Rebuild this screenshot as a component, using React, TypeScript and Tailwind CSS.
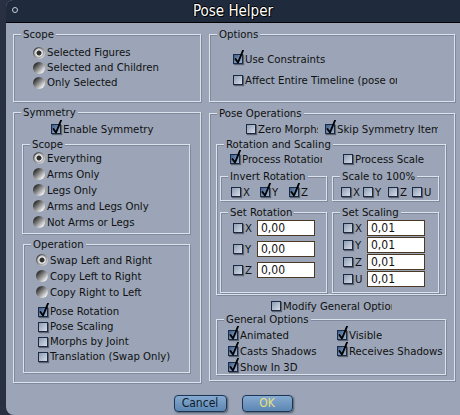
import React from "react";

const font = "font-['DejaVu_Sans_Condensed','DejaVu_Sans',sans-serif] font-stretch-condensed";

const Group = ({ label, className, children }: { label: string; className?: string; children?: React.ReactNode }) => (
  <div
    className={`relative box-border border border-[#dce3ec] shadow-[1px_1px_0_#7f899b,inset_1px_1px_0_#7f899b] ${className ?? ""}`}
  >
    <span className="absolute left-[7px] top-[-7px] px-[2px] leading-[13px] bg-[#9ba5b7] whitespace-nowrap">{label}</span>
    {children}
  </div>
);

const Check = ({ checked }: { checked?: boolean }) => (
  <span
    className={`relative inline-block w-[10px] h-[10px] shrink-0 border border-[#1b2a44] shadow-[1px_1px_1px_rgba(0,0,0,0.4)] ${
      checked ? "bg-[linear-gradient(135deg,#3d5d8c,#a3b6cf)]" : "bg-[linear-gradient(135deg,#8e9cb2,#d6dde8)]"
    }`}
  >
    {checked && (
      <svg className="absolute left-[0px] top-[-5px] w-[11px] h-[14px]" viewBox="0 0 11 14">
        <path d="M1.5 9 L4 12.5 L9 0.5" stroke="#000" strokeWidth="1.9" fill="none" strokeLinecap="round" strokeLinejoin="round" />
      </svg>
    )}
  </span>
);

const Radio = ({ on }: { on?: boolean }) => (
  <span
    className={`inline-block w-[12px] h-[12px] rounded-full shrink-0 ${
      on
        ? "bg-[radial-gradient(circle,#2e2e2e_0_2px,#f2f2f2_3px,#a8a8a8_4.5px,transparent_5px),linear-gradient(135deg,#262626,#f5f5f5)]"
        : "bg-[linear-gradient(135deg,#262626_15%,#f5f5f5_85%)]"
    }`}
  />
);

const RadioRow = ({ on, label, h = "h-[15px]" }: { on?: boolean; label: string; h?: string }) => (
  <div className={`flex items-center gap-[2px] ${h}`}>
    <Radio on={on} />
    <span className="whitespace-nowrap">{label}</span>
  </div>
);

const CheckRow = ({ on, label, w, className }: { on?: boolean; label: string; w?: string; className?: string }) => (
  <div className={`flex items-center gap-[2px] h-[14px] ${className ?? ""}`}>
    <Check checked={on} />
    <span className={`whitespace-nowrap overflow-hidden ${w ?? ""}`}>{label}</span>
  </div>
);

const Field = ({ axis, value }: { axis: string; value: string }) => (
  <div className="flex items-center h-[16px]">
    <Check />
    <span className="w-[14px] pl-[2px]">{axis}</span>
    <div className="w-[58px] h-[16px] bg-white border border-[#4a3925] pl-[3px] text-[12px] leading-[14px]">{value}</div>
  </div>
);

export default function App() {
  return (
    <div className={`w-[460px] h-[415px] bg-[#283041] flex overflow-hidden text-[11.3px] leading-[13px] text-[#111] ${font}`}>
      <div className="ml-[6px] flex-1 flex flex-col bg-[#9ba5b7] rounded-tl-[7px] rounded-bl-[8px] overflow-hidden">
        <div className="relative h-[23px] shrink-0 bg-[#1f2a3c] border-b border-black flex items-center justify-center">
          <span className="absolute left-[6px] top-[7px] w-[6px] h-[6px] rounded-full border-[1.5px] border-[#c9ced6]" />
          <span className="text-white text-[15px] leading-[20px] [text-shadow:1px_1px_0_#000,-1px_0_0_#000,0_-1px_0_#000]">
            Pose Helper
          </span>
        </div>

        <div className="flex gap-[8px] pl-[7px] pt-[11px]">
          {/* left column */}
          <div className="w-[188px] flex flex-col">
            <Group label="Scope" className="h-[68px] pt-[10px] pl-[19px]">
              <RadioRow on label="Selected Figures" />
              <RadioRow label="Selected and Children" />
              <RadioRow label="Only Selected" />
            </Group>

            <Group label="Symmetry" className="mt-[10px] h-[271px]">
              <CheckRow on label="Enable Symmetry" className="mt-[9px] ml-[37px]" />
              <Group label="Scope" className="mt-[8px] ml-[8px] w-[168px] h-[90px] pt-[5px] pl-[10px]">
                <RadioRow on label="Everything" h="h-[16px]" />
                <RadioRow label="Arms Only" h="h-[16px]" />
                <RadioRow label="Legs Only" h="h-[16px]" />
                <RadioRow label="Arms and Legs Only" h="h-[16px]" />
                <RadioRow label="Not Arms or Legs" h="h-[16px]" />
              </Group>
              <Group label="Operation" className="mt-[10px] ml-[9px] w-[167px] h-[129px] pt-[7px] pl-[12px]">
                <RadioRow on label="Swap Left and Right" h="h-[16px]" />
                <RadioRow label="Copy Left to Right" h="h-[16px]" />
                <RadioRow label="Copy Right to Left" h="h-[16px]" />
                <div className="mt-[4px] pl-[2px] flex flex-col">
                  <div className="flex items-center gap-[2px] h-[15px]"><Check checked /><span>Pose Rotation</span></div>
                  <div className="flex items-center gap-[2px] h-[15px]"><Check /><span>Pose Scaling</span></div>
                  <div className="flex items-center gap-[2px] h-[15px]"><Check /><span>Morphs by Joint</span></div>
                  <div className="flex items-center gap-[2px] h-[15px]"><Check /><span>Translation (Swap Only)</span></div>
                </div>
              </Group>
            </Group>
          </div>

          {/* right column */}
          <div className="w-[246px] flex flex-col">
            <Group label="Options" className="h-[68px] pt-[17px] pl-[23px]">
              <CheckRow on label="Use Constraints" w="w-[152px]" />
              <CheckRow label="Affect Entire Timeline (pose only)" w="w-[152px]" className="mt-[7px]" />
            </Group>

            <Group label="Pose Operations" className="mt-[11px] h-[268px]">
              <div className="flex items-center mt-[8px] ml-[36px] gap-[7px]">
                <CheckRow label="Zero Morphs" w="w-[60px]" />
                <CheckRow on label="Skip Symmetry Items" w="w-[101px]" />
              </div>

              <Group label="Rotation and Scaling" className="mt-[8px] ml-[6px] w-[230px] h-[151px]">
                <div className="flex items-center mt-[7px] ml-[13px] gap-[21px]">
                  <CheckRow on label="Process Rotation" w="w-[80px]" />
                  <CheckRow label="Process Scale" />
                </div>
                <div className="flex mt-[10px] ml-[3px] gap-[5px]">
                  <Group label="Invert Rotation" className="w-[107px] h-[25px] pt-[8px] pl-[10px] flex items-start">
                    <CheckRow label="X" w="w-[17px]" />
                    <CheckRow on label="Y" w="w-[17px]" />
                    <CheckRow on label="Z" />
                  </Group>
                  <Group label="Scale to 100%" className="w-[107px] h-[25px] pt-[8px] pl-[8px] flex items-start">
                    <CheckRow label="X" w="w-[10px]" />
                    <CheckRow label="Y" w="w-[13px]" />
                    <CheckRow label="Z" w="w-[12px]" />
                    <CheckRow label="U" />
                  </Group>
                </div>
                <div className="flex mt-[11px] ml-[3px] gap-[5px]">
                  <Group label="Set Rotation" className="w-[107px] h-[81px] pt-[7px] pl-[12px] flex flex-col gap-[5px]">
                    <Field axis="X" value="0,00" />
                    <Field axis="Y" value="0,00" />
                    <Field axis="Z" value="0,00" />
                  </Group>
                  <Group label="Set Scaling" className="w-[107px] h-[81px] pt-[7px] pl-[10px] flex flex-col gap-[1px]">
                    <Field axis="X" value="0,01" />
                    <Field axis="Y" value="0,01" />
                    <Field axis="Z" value="0,01" />
                    <Field axis="U" value="0,01" />
                  </Group>
                </div>
              </Group>

              <CheckRow label="Modify General Options" w="w-[109px]" className="mt-[4px] ml-[61px]" />

              <Group label="General Options" className="mt-[6px] ml-[6px] w-[230px] h-[56px] pt-[8px] pl-[11px]">
                <div className="grid grid-cols-[109px_1fr] gap-y-[2px]">
                  <CheckRow on label="Animated" />
                  <CheckRow on label="Visible" />
                  <CheckRow on label="Casts Shadows" />
                  <CheckRow on label="Receives Shadows" />
                  <CheckRow on label="Show In 3D" />
                </div>
              </Group>
            </Group>
          </div>
        </div>

        <div className="flex justify-center gap-[15px] mt-[12px] text-[12px]">
          <button className="w-[53px] h-[17px] rounded-[4px] border border-[#1c3657] bg-[linear-gradient(#86aad0,#5d86b3)] shadow-[1px_1px_2px_rgba(0,0,0,0.45)] text-[#0d1a2b] leading-[15px]">
            Cancel
          </button>
          <button className="w-[51px] h-[17px] rounded-[4px] border border-[#1c3657] bg-[linear-gradient(#86aad0,#5d86b3)] shadow-[1px_1px_2px_rgba(0,0,0,0.45)] text-[#e6e27c] leading-[15px]">
            OK
          </button>
        </div>
      </div>
    </div>
  );
}
